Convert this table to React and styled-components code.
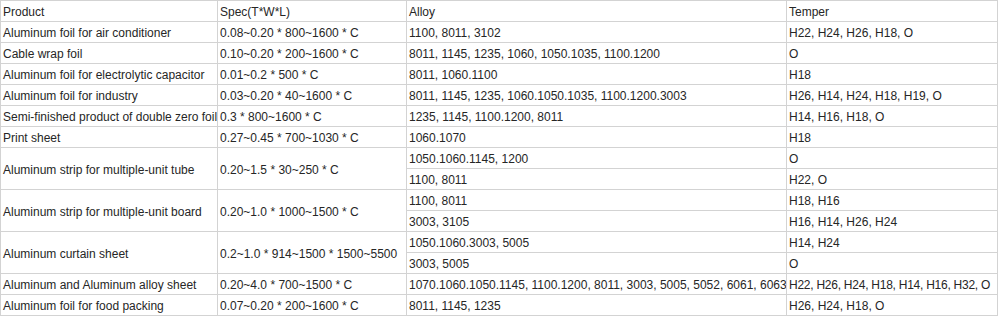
import React from "react";
import styled, { createGlobalStyle } from "styled-components";

const Global = createGlobalStyle`
  html, body { margin: 0; padding: 0; background: #fff; }
  body { font-family: "Liberation Sans", Arial, sans-serif; }
`;

const Table = styled.table`
  border-collapse: collapse;
  table-layout: fixed;
  width: 998px;
  font-family: "Liberation Sans", Arial, sans-serif;
  font-size: 12px;
  color: #262626;
`;

const Cell = styled.td`
  border: 1px solid #d3d3d3;
  height: 18px;
  padding: 2px 2px 0 2px;
  white-space: nowrap;
  overflow: hidden;
  vertical-align: middle;
  line-height: 14px;
  letter-spacing: ${(p) => (p.$tight ? "-0.25px" : "normal")};
`;

const rows = [
  { p: "Aluminum foil for air conditioner", s: "0.08~0.20 * 800~1600 * C", a: [["1100, 8011, 3102", "H22, H24, H26, H18, O"]] },
  { p: "Cable wrap foil", s: "0.10~0.20 * 200~1600 * C", a: [["8011, 1145, 1235, 1060, 1050.1035, 1100.1200", "O"]] },
  { p: "Aluminum foil for electrolytic capacitor", s: "0.01~0.2 * 500 * C", a: [["8011, 1060.1100", "H18"]] },
  { p: "Aluminum foil for industry", s: "0.03~0.20 * 40~1600 * C", a: [["8011, 1145, 1235, 1060.1050.1035, 1100.1200.3003", "H26, H14, H24, H18, H19, O"]] },
  { p: "Semi-finished product of double zero foil", s: "0.3 * 800~1600 * C", a: [["1235, 1145, 1100.1200, 8011", "H14, H16, H18, O"]] },
  { p: "Print sheet", s: "0.27~0.45 * 700~1030 * C", a: [["1060.1070", "H18"]] },
  { p: "Aluminum strip for multiple-unit tube", s: "0.20~1.5 * 30~250 * C", a: [["1050.1060.1145, 1200", "O"], ["1100, 8011", "H22, O"]] },
  { p: "Aluminum strip for multiple-unit board", s: "0.20~1.0 * 1000~1500 * C", a: [["1100, 8011", "H18, H16"], ["3003, 3105", "H16, H14, H26, H24"]] },
  { p: "Aluminum curtain sheet", s: "0.2~1.0 * 914~1500 * 1500~5500", a: [["1050.1060.3003, 5005", "H14, H24"], ["3003, 5005", "O"]] },
  { p: "Aluminum and Aluminum alloy sheet", s: "0.20~4.0 * 700~1500 * C", a: [["1070.1060.1050.1145, 1100.1200, 8011, 3003, 5005, 5052, 6061, 6063", "H22, H26, H24, H18, H14, H16, H32, O"]], tight: true },
  { p: "Aluminum foil for food packing", s: "0.07~0.20 * 200~1600 * C", a: [["8011, 1145, 1235", "H26, H24, H18, O"]] },
];

export default function App() {
  return (
    <>
      <Global />
      <Table>
        <colgroup>
          <col style={{ width: 217 }} />
          <col style={{ width: 189 }} />
          <col style={{ width: 380 }} />
          <col style={{ width: 211 }} />
        </colgroup>
        <tbody>
          <tr>
            <Cell>Product</Cell>
            <Cell>Spec(T*W*L)</Cell>
            <Cell>Alloy</Cell>
            <Cell>Temper</Cell>
          </tr>
          {rows.map((r) =>
            r.a.map((sub, i) => (
              <tr key={r.p + i}>
                {i === 0 && <Cell rowSpan={r.a.length}>{r.p}</Cell>}
                {i === 0 && <Cell rowSpan={r.a.length}>{r.s}</Cell>}
                <Cell>{sub[0]}</Cell>
                <Cell $tight={r.tight}>{sub[1]}</Cell>
              </tr>
            ))
          )}
        </tbody>
      </Table>
    </>
  );
}
